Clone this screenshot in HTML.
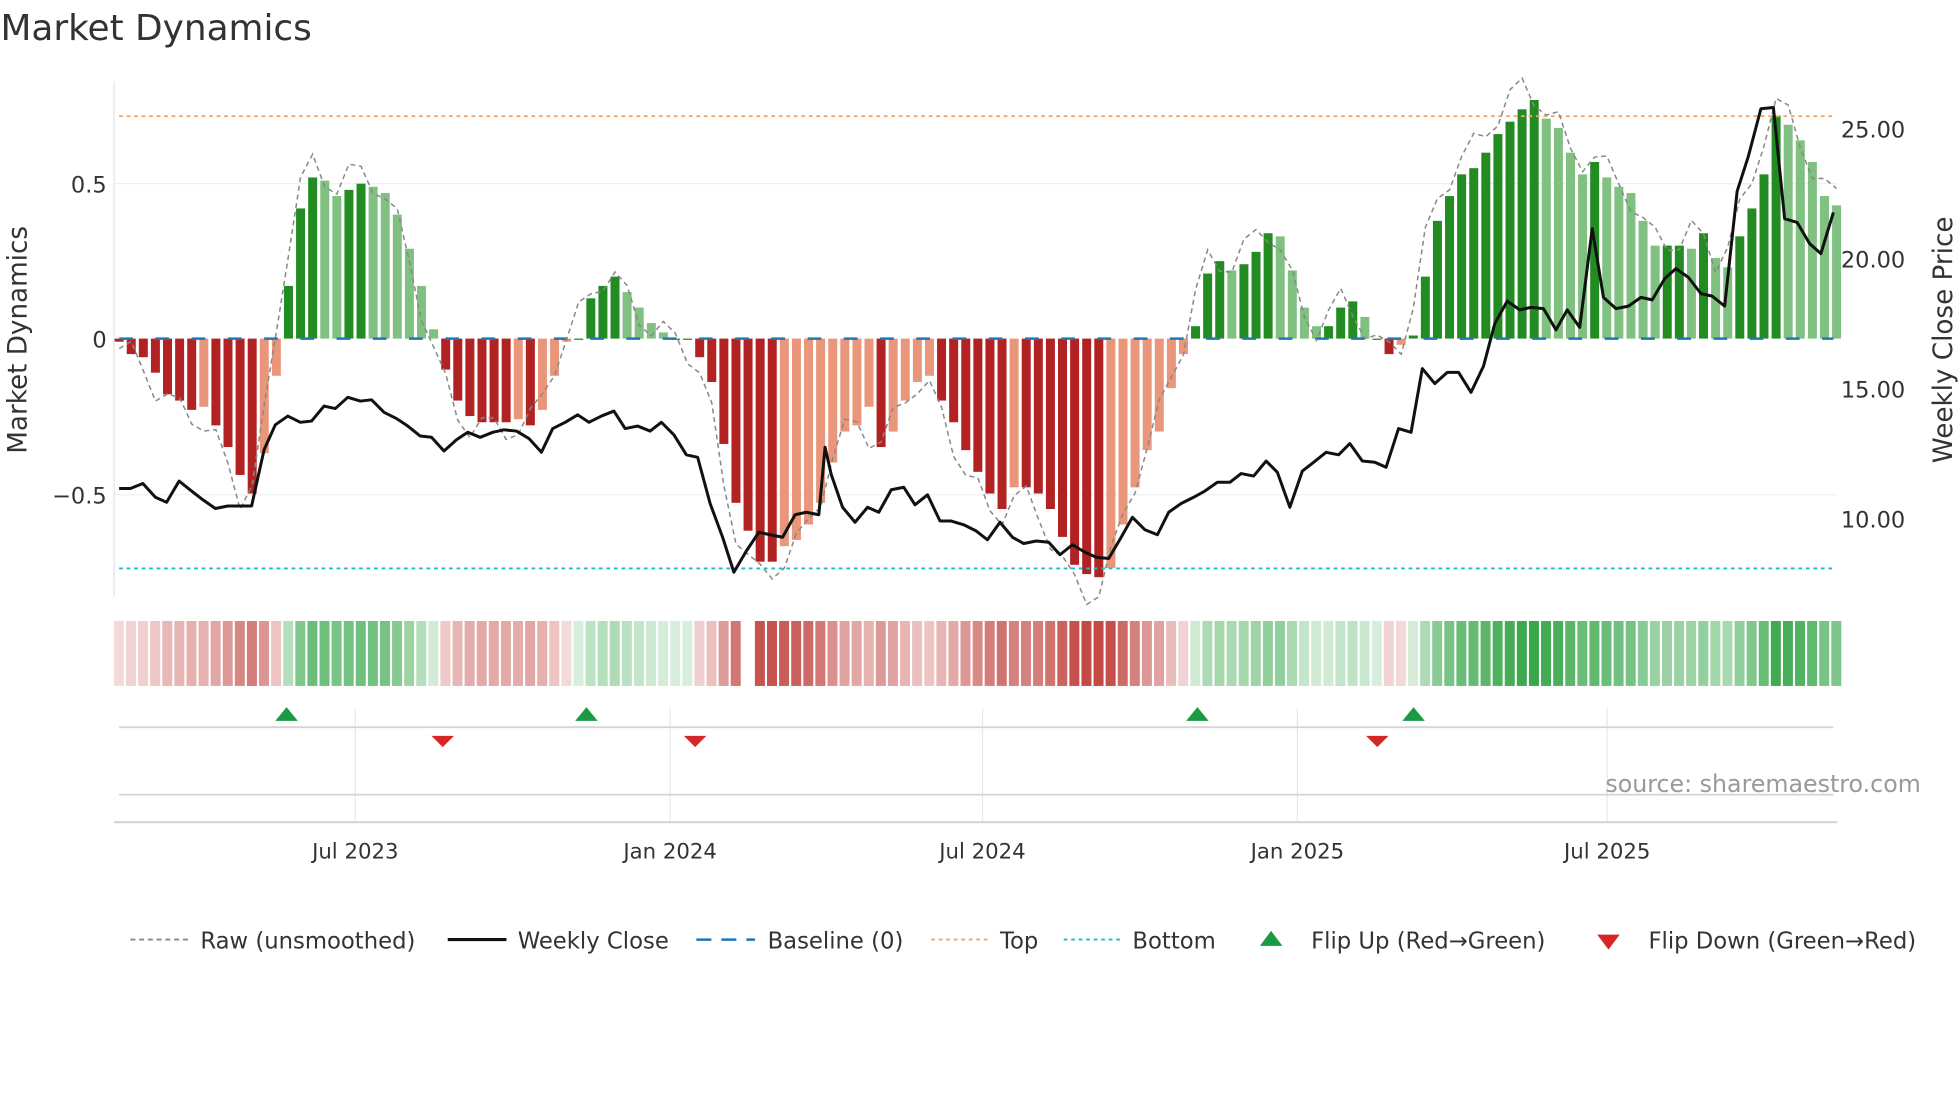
<!DOCTYPE html>
<html><head><meta charset="utf-8"><style>
html,body{margin:0;padding:0;background:#fff;width:1960px;height:1102px;overflow:hidden}
svg{display:block}
text{font-family:"DejaVu Sans","Liberation Sans",sans-serif}
</style></head><body>
<svg id="s" width="1960" height="1102" viewBox="0 0 1568 882" xmlns="http://www.w3.org/2000/svg">
<text x="0" y="32" font-size="28.7" fill="#333">Market Dynamics</text>
<g stroke="#eef0f4" stroke-width="1">
<line x1="92" y1="147" x2="1470" y2="147"/><line x1="92" y1="396" x2="1470" y2="396"/>
</g>
<line x1="91" y1="65" x2="91" y2="478" stroke="#e4e4e4"/>
<g font-size="18" fill="#333" text-anchor="end">
<text x="85" y="154">0.5</text><text x="85" y="278">0</text><text x="85" y="403">−0.5</text>
</g>
<g font-size="18" fill="#333">
<text x="1473" y="110">25.00</text><text x="1473" y="214">20.00</text><text x="1473" y="318">15.00</text><text x="1473" y="422">10.00</text>
</g>
<text transform="translate(21,272) rotate(-90)" font-size="21" fill="#333" text-anchor="middle">Market Dynamics</text>
<text transform="translate(1562,272) rotate(-90)" font-size="21" fill="#333" text-anchor="middle">Weekly Close Price</text>
<g id="bars"></g>
<g id="heat"></g>
<line x1="95" y1="93" x2="1467" y2="93" stroke="#f4a460" stroke-width="1.5" stroke-dasharray="3,3"/>
<line x1="95" y1="455" x2="1467" y2="455" stroke="#17becf" stroke-width="1.5" stroke-dasharray="3,3"/>
<line x1="95" y1="271" x2="1467" y2="271" stroke="#1f77b4" stroke-width="2" stroke-dasharray="11,18"/>
<polyline id="raw" fill="none" stroke="#888" stroke-width="1.2" stroke-dasharray="4,3"/>
<polyline id="close" fill="none" stroke="#111" stroke-width="2.4" stroke-linejoin="round"/>
<g stroke="#e8e8e8">
<line x1="284" y1="567" x2="284" y2="658"/><line x1="536" y1="567" x2="536" y2="658"/><line x1="786" y1="567" x2="786" y2="658"/><line x1="1038" y1="567" x2="1038" y2="658"/><line x1="1286" y1="567" x2="1286" y2="658"/>
</g>
<line x1="95" y1="582" x2="1467" y2="582" stroke="#d6d6d6" stroke-width="1.5"/>
<line x1="95" y1="636" x2="1467" y2="636" stroke="#d6d6d6" stroke-width="1.5"/>
<line x1="91" y1="658" x2="1470" y2="658" stroke="#d0d0d0" stroke-width="1.5"/>
<g fill="#1a9a45">
<polygon points="220,577 238,577 229,566"/><polygon points="460,577 478,577 469,566"/><polygon points="949,577 967,577 958,566"/><polygon points="1122,577 1140,577 1131,566"/>
</g>
<g fill="#d62728">
<polygon points="345,589 363,589 354,598"/><polygon points="547,589 565,589 556,598"/><polygon points="1093,589 1111,589 1102,598"/>
</g>
<text x="1537" y="634" font-size="19" fill="#999" text-anchor="end">source: sharemaestro.com</text>
<g font-size="17" fill="#333" text-anchor="middle">
<text x="284" y="687">Jul 2023</text><text x="536" y="687">Jan 2024</text><text x="786" y="687">Jul 2024</text><text x="1038" y="687">Jan 2025</text><text x="1286" y="687">Jul 2025</text>
</g>
<g font-size="18.2" fill="#333">
<line x1="104" y1="752" x2="150" y2="752" stroke="#888" stroke-width="1.5" stroke-dasharray="4,3"/><text x="160" y="759">Raw (unsmoothed)</text>
<line x1="358" y1="752" x2="405" y2="752" stroke="#111" stroke-width="2.5"/><text x="414" y="759">Weekly Close</text>
<line x1="557" y1="752" x2="604" y2="752" stroke="#1f77b4" stroke-width="2" stroke-dasharray="12,8"/><text x="614" y="759">Baseline (0)</text>
<line x1="745" y1="752" x2="791" y2="752" stroke="#f4a460" stroke-width="1.5" stroke-dasharray="3,3"/><text x="800" y="759">Top</text>
<line x1="851" y1="752" x2="897" y2="752" stroke="#17becf" stroke-width="1.5" stroke-dasharray="3,3"/><text x="906" y="759">Bottom</text>
<polygon points="1008,757 1026,757 1017,745" fill="#1a9a45"/><text x="1049" y="759">Flip Up (Red→Green)</text>
<polygon points="1278,748 1296,748 1287,760" fill="#d62728"/><text x="1319" y="759">Flip Down (Green→Red)</text>
</g>
</svg>
<script>
var v=[-0.01,-0.05,-0.06,-0.11,-0.18,-0.2,-0.23,-0.22,-0.28,-0.35,-0.44,-0.5,-0.37,-0.12,0.17,0.42,0.52,0.51,0.46,0.48,0.5,0.49,0.47,0.4,0.29,0.17,0.03,-0.1,-0.2,-0.25,-0.27,-0.27,-0.27,-0.26,-0.28,-0.23,-0.12,-0.01,0.0,0.13,0.17,0.2,0.15,0.1,0.05,0.02,0.0,0,-0.06,-0.14,-0.34,-0.53,-0.62,-0.72,-0.72,-0.67,-0.65,-0.6,-0.53,-0.4,-0.3,-0.28,-0.22,-0.35,-0.3,-0.2,-0.14,-0.12,-0.2,-0.27,-0.36,-0.43,-0.5,-0.55,-0.48,-0.48,-0.5,-0.55,-0.64,-0.73,-0.76,-0.77,-0.74,-0.6,-0.48,-0.36,-0.3,-0.16,-0.05,0.04,0.21,0.25,0.22,0.24,0.28,0.34,0.33,0.22,0.1,0.04,0.04,0.1,0.12,0.07,0.0,-0.05,-0.02,0.01,0.2,0.38,0.46,0.53,0.55,0.6,0.66,0.7,0.74,0.77,0.71,0.68,0.6,0.53,0.57,0.52,0.49,0.47,0.38,0.3,0.3,0.3,0.29,0.34,0.26,0.23,0.33,0.42,0.53,0.72,0.69,0.64,0.57,0.46,0.43];
var NS="http://www.w3.org/2000/svg",b=document.getElementById('bars'),h=document.getElementById('heat');
function r(p,x,y,w,hh,f){var e=document.createElementNS(NS,'rect');e.setAttribute('x',x);e.setAttribute('y',y);e.setAttribute('width',w);e.setAttribute('height',hh);e.setAttribute('fill',f);p.appendChild(e);}
var raw=[];
for(var i=0;i<v.length;i++){var x=95+9.68*i,val=v[i],p=i?v[i-1]:0;
 var dark=Math.abs(val)>=Math.abs(p)||(val*p<=0);
 var col=val>=0?(dark?'#228b22':'#80c080'):(dark?'#b22222':'#e9967a');
 var y0=271,y1=271-248*val;r(b,x-3.6,Math.min(y0,y1),7.2,Math.max(Math.abs(y1-y0),1),col);
 if(i!=52){var a=0.18+0.75*Math.min(Math.abs(val)/0.77,1);
 r(h,x-4.2,497,8,52,val>=0?'rgba(40,160,60,'+a+')':'rgba(190,60,55,'+a+')');}
 var nv=(i<v.length-1?v[i+1]:val);var rv=(val*0.5+nv*0.5)*1.07+0.05*Math.sin(i*1.7);
 raw.push(x+','+(271-248*rv).toFixed(1));}
document.getElementById('raw').setAttribute('points',raw.join(' '));
document.getElementById('close').setAttribute('points',"95,391 104,391 114,387 124,398 133,402 143,385 153,393 162,400 172,407 182,405 191,405 201,405 211,360 220,340 230,333 240,338 249,337 259,325 268,327 278,318 288,321 297,320 307,330 317,335 326,341 336,349 345,350 355,361 365,352 374,346 384,350 394,346 403,344 413,345 423,351 433,362 442,343 452,338 462,332 471,338 481,333 491,329 500,343 510,341 520,345 529,338 539,348 549,364 558,366 568,403 578,430 587,458 597,441 607,426 616,428 626,430 636,412 645,410 655,412 660,358 665,380 674,406 684,418 694,406 703,410 713,392 723,390 732,404 742,396 752,417 761,417 771,420 781,425 790,432 800,418 810,430 819,435 829,433 839,434 848,444 858,436 868,442 877,446 887,447 897,430 906,414 916,424 926,428 935,410 945,403 955,398 964,393 974,386 984,386 993,379 1003,381 1013,369 1022,378 1032,406 1042,377 1051,370 1061,362 1071,364 1080,355 1090,369 1100,370 1109,374 1119,343 1129,346 1138,295 1148,307 1158,298 1167,298 1177,314 1187,293 1196,259 1206,241 1216,248 1225,246 1235,247 1245,264 1254,248 1264,262 1274,183 1283,238 1293,247 1303,245 1313,238 1322,240 1332,223 1341,215 1351,222 1361,235 1370,237 1380,245 1390,153 1399,125 1409,87 1419,86 1428,175 1438,178 1448,195 1457,203 1467,170");
</script>
</body></html>
